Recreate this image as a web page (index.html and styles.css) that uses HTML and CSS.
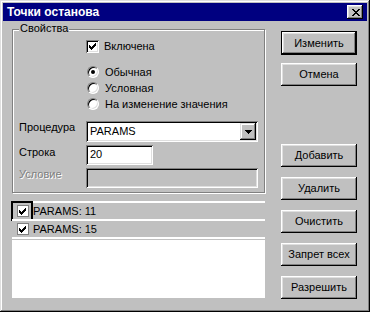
FILE: index.html
```html
<!DOCTYPE html>
<html>
<head>
<meta charset="utf-8">
<link rel="stylesheet" href="styles.css">
</head>
<body>
<div class="window">
  <div class="titlebar">
    <span class="title">Точки останова</span>
    <span class="close"><svg width="8" height="7" viewBox="0 0 8 7" shape-rendering="crispEdges"><path d="M0 0h2v1h-2z M6 0h2v1h-2z M1 1h2v1h-2z M5 1h2v1h-2z M2 2h4v1h-4z M3 3h2v1h-2z M2 4h4v1h-4z M1 5h2v1h-2z M5 5h2v1h-2z M0 6h2v1h-2z M6 6h2v1h-2z" fill="#000"/></svg></span>
  </div>
  <div class="content">
    <div class="left">
      <div class="group">
        <span class="legend">Свойства</span>
        <div class="check-row">
          <span class="checkbox"><svg width="7" height="7" viewBox="0 0 7 7" shape-rendering="crispEdges"><path d="M0 2h1v1h1v1h1v-1h1v-1h1v-1h1v-1h1v3h-1v1h-1v1h-1v1h-1v1h-1v-1h-1v-1h-1z" fill="#000"/></svg></span>
          <span>Включена</span>
        </div>
        <div class="radios">
          <div class="radio-row"><span class="radio on"></span><span>Обычная</span></div>
          <div class="radio-row"><span class="radio"></span><span>Условная</span></div>
          <div class="radio-row"><span class="radio"></span><span>На изменение значения</span></div>
        </div>
        <div class="form">
          <span class="lbl">Процедура</span>
          <div class="combo"><span class="combo-text">PARAMS</span><span class="drop"><svg width="7" height="4" viewBox="0 0 7 4" shape-rendering="crispEdges"><path d="M0 0h7v1h-1v1h-1v1h-1v1h-1v-1h-1v-1h-1v-1h-1z" fill="#000"/></svg></span></div>
          <span class="lbl lbl-row2">Строка</span>
          <div class="edit edit-short">20</div>
          <span class="lbl disabled">Условие</span>
          <div class="edit edit-disabled"></div>
        </div>
      </div>
      <div class="list">
        <div class="item">
          <span class="item-check focus"><span class="mini-check"><svg width="7" height="7" viewBox="0 0 7 7" shape-rendering="crispEdges"><path d="M0 2h1v1h1v1h1v-1h1v-1h1v-1h1v-1h1v3h-1v1h-1v1h-1v1h-1v1h-1v-1h-1v-1h-1z" fill="#000"/></svg></span></span>
          <span class="item-text">PARAMS: 11</span>
        </div>
        <div class="item">
          <span class="item-check"><span class="mini-check"><svg width="7" height="7" viewBox="0 0 7 7" shape-rendering="crispEdges"><path d="M0 2h1v1h1v1h1v-1h1v-1h1v-1h1v-1h1v3h-1v1h-1v1h-1v1h-1v1h-1v-1h-1v-1h-1z" fill="#000"/></svg></span></span>
          <span class="item-text">PARAMS: 15</span>
        </div>
        <div class="list-rest"></div>
      </div>
    </div>
    <div class="buttons">
      <div class="btn default">Изменить</div>
      <div class="btn">Отмена</div>
      <div class="btn btn-gap">Добавить</div>
      <div class="btn">Удалить</div>
      <div class="btn">Очистить</div>
      <div class="btn">Запрет всех</div>
      <div class="btn">Разрешить</div>
    </div>
  </div>
</div>
</body>
</html>
```
FILE: styles.css
```css
* { box-sizing: border-box; }
html, body { margin: 0; padding: 0; }
body {
  width: 370px;
  height: 312px;
  background: #c0c0c0;
  font-family: "Liberation Sans", Arial, sans-serif;
  font-size: 11px;
  line-height: 13px;
  color: #000;
  overflow: hidden;
}
.window {
  width: 370px;
  height: 312px;
  padding: 3px;
  background: #c0c0c0;
  box-shadow: inset -1px -1px #000, inset 1px 1px #dfdfdf, inset -2px -2px #808080, inset 2px 2px #fff;
  display: flex;
  flex-direction: column;
}
.titlebar {
  height: 18px;
  flex: none;
  background: #000080;
  color: #fff;
  display: flex;
  align-items: center;
  justify-content: space-between;
  padding: 0 4px 0 4px;
}
.title { font-weight: bold; font-size: 12px; }
.close {
  width: 16px;
  height: 14px;
  background: #c0c0c0;
  box-shadow: inset -1px -1px #000, inset 1px 1px #fff, inset -2px -2px #808080, inset 2px 2px #dfdfdf;
  display: flex;
  align-items: center;
  justify-content: center;
  padding-left: 1px;
}
.close svg { display: block; }
.content { display: flex; padding-left: 9px; }
.left { width: 253px; padding-top: 8px; }
.group {
  position: relative;
  width: 253px;
  height: 164px;
  border: 1px solid #808080;
  box-shadow: inset 1px 1px #fff, 1px 1px #fff;
  padding-top: 10px;
}
.legend {
  position: absolute;
  top: -8px;
  left: 6px;
  padding: 0 1px;
  background: #c0c0c0;
}
.check-row {
  display: flex;
  align-items: center;
  height: 13px;
  margin-left: 73px;
  gap: 5px;
}
.checkbox {
  width: 13px;
  height: 13px;
  background: #fff;
  box-shadow: inset 1px 1px #808080, inset -1px -1px #fff, inset 2px 2px #000, inset -2px -2px #dfdfdf;
  display: flex;
  align-items: center;
  justify-content: center;
}
.checkbox svg { display: block; }
.radios { margin-top: 11px; margin-left: 74px; }
.radio-row { display: flex; align-items: center; height: 16px; gap: 6px; }
.radio {
  width: 12px;
  height: 12px;
  border-radius: 50%;
  background: #fff;
  border: 1px solid;
  border-color: #808080 #fff #fff #808080;
  box-shadow: inset 1px 1px #000, inset -1px -1px #dfdfdf;
  display: flex;
  align-items: center;
  justify-content: center;
}
.radio.on::after {
  content: "";
  width: 4px;
  height: 4px;
  border-radius: 50%;
  background: #000;
}
.form {
  margin-top: 9px;
  padding-left: 6px;
  display: grid;
  grid-template-columns: 67px auto;
  grid-template-rows: 21px 20px 20px;
  row-gap: 2px;
  align-items: start;
}
.form .edit-disabled, .form .disabled { margin-top: 2px; }
.lbl { padding-top: 0; }
.lbl-row2 { padding-top: 2px; }
.disabled { color: #808080; text-shadow: 1px 1px #fff; }
.combo {
  width: 172px;
  height: 21px;
  background: #fff;
  box-shadow: inset 1px 1px #808080, inset -1px -1px #fff, inset 2px 2px #000, inset -2px -2px #dfdfdf;
  display: flex;
  align-items: center;
  justify-content: space-between;
  padding: 2px;
}
.combo-text { padding-left: 2px; }
.drop {
  width: 16px;
  height: 17px;
  background: #c0c0c0;
  box-shadow: inset -1px -1px #000, inset 1px 1px #dfdfdf, inset -2px -2px #808080, inset 2px 2px #fff;
  display: flex;
  align-items: center;
  justify-content: center;
}
.drop svg { display: block; }
.edit {
  height: 20px;
  background: #fff;
  box-shadow: inset 1px 1px #808080, inset -1px -1px #fff, inset 2px 2px #000, inset -2px -2px #dfdfdf;
  padding: 3px 4px;
}
.edit-short { width: 67px; margin-top: 1px; }
.edit-disabled { width: 172px; background: #c0c0c0; }
.list {
  margin-top: 8px;
  width: 253px;
  height: 97px;
  background: #fff;
  display: flex;
  flex-direction: column;
}
.item {
  height: 18px;
  border-top: 2px solid #fff;
  background: #c0c0c0;
  display: flex;
  align-items: center;
  position: relative;
}
.item-check {
  width: 20px;
  height: 16px;
  display: flex;
  align-items: center;
  justify-content: center;
  padding-left: 1px;
}
.item-check.focus { outline: 2px solid #000; outline-offset: -1px; height: 18px; margin-top: 0; }
.mini-check {
  width: 12px;
  height: 12px;
  background: #fff;
  border: 1px solid #808080;
  display: flex;
  align-items: center;
  justify-content: center;
}
.mini-check svg { display: block; }
.item-text { padding-left: 1px; }
.list-rest { flex: 1; border-top: 2px solid #fff; box-shadow: inset 0 1px #c0c0c0; }
.buttons {
  margin-left: 16px;
  padding-top: 10px;
  display: flex;
  flex-direction: column;
  gap: 10px;
}
.btn {
  width: 76px;
  height: 23px;
  background: #c0c0c0;
  box-shadow: inset -1px -1px #000, inset 1px 1px #fff, inset -2px -2px #808080, inset 2px 2px #dfdfdf;
  display: flex;
  align-items: center;
  justify-content: center;
}
.btn.default {
  height: 24px;
  border: 1px solid #000;
  box-shadow: inset -1px -1px #000, inset 1px 1px #fff, inset -2px -2px #808080, inset 2px 2px #dfdfdf;
  margin-bottom: -2px;
}
.btn-gap { margin-top: 48px; }
```
